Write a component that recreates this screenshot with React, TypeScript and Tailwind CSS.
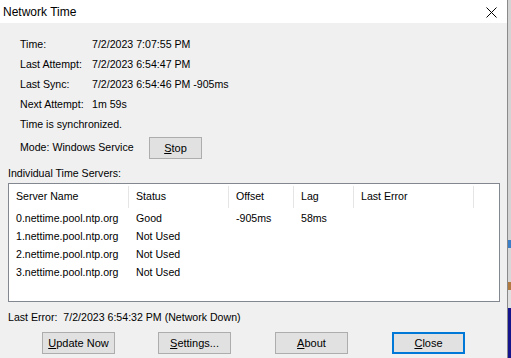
import React from "react";

const font = { fontFamily: '"Liberation Sans", Arial, sans-serif' };

function Btn({ children, w = "w-[73px]", focused = false, className = "" }: { children: React.ReactNode; w?: string; focused?: boolean; className?: string }) {
  return (
    <div
      className={`${w} h-[22px] flex items-center justify-center bg-[#e1e1e1] text-[11px] text-black ${focused ? "border-2 border-[#0078d7]" : "border border-[#adadad]"} ${className}`}
    >
      {children}
    </div>
  );
}

function InfoRow({ label, value }: { label: string; value: string }) {
  return (
    <div className="h-[20px] flex items-center">
      <span className="w-[72px]">{label}</span>
      <span>{value}</span>
    </div>
  );
}

const cols = [
  { name: "Server Name", w: "w-[120px]" },
  { name: "Status", w: "w-[100px]" },
  { name: "Offset", w: "w-[65px]" },
  { name: "Lag", w: "w-[60px]" },
  { name: "Last Error", w: "w-[120px]" },
];

const rows = [
  ["0.nettime.pool.ntp.org", "Good", "-905ms", "58ms", ""],
  ["1.nettime.pool.ntp.org", "Not Used", "", "", ""],
  ["2.nettime.pool.ntp.org", "Not Used", "", "", ""],
  ["3.nettime.pool.ntp.org", "Not Used", "", "", ""],
];

export default function App() {
  return (
    <div className="w-[511px] h-[358px] flex overflow-hidden text-[10.6px] text-black" style={font}>
      <div className="w-[507px] h-full flex flex-col bg-[#f0f0f0]">
        <div className="h-[23px] bg-white flex items-center justify-between shrink-0">
          <span className="pl-[3px] text-[12px]">Network Time</span>
          <svg width="11" height="11" viewBox="0 0 11 11" className="mr-[10px] mt-[1px]">
            <path d="M0.5 0.5 L10.5 10.5 M10.5 0.5 L0.5 10.5" stroke="#000" strokeWidth="1" />
          </svg>
        </div>
        <div className="pl-[20px] pt-[12px] flex flex-col">
          <InfoRow label="Time:" value="7/2/2023 7:07:55 PM" />
          <InfoRow label="Last Attempt:" value="7/2/2023 6:54:47 PM" />
          <InfoRow label="Last Sync:" value="7/2/2023 6:54:46 PM -905ms" />
          <InfoRow label="Next Attempt:" value="1m 59s" />
          <div className="h-[20px] flex items-center">Time is synchronized.</div>
          <div className="mt-[2px] h-[22px] flex items-center">
            <span className="w-[129px]">Mode: Windows Service</span>
            <Btn w="w-[53px]">
              <span className="underline">S</span>top
            </Btn>
          </div>
        </div>
        <div className="pl-[8px] mt-[8px] h-[14px] flex items-center">Individual Time Servers:</div>
        <div className="ml-[8px] mt-[2px] w-[492px] h-[119px] bg-white border border-[#828790] flex flex-col">
          <div className="mt-[2px] h-[22px] flex">
            {cols.map((c) => (
              <div key={c.name} className={`${c.w} h-full flex items-center pl-[7px] border-r border-[#e5e5e5]`}>
                {c.name}
              </div>
            ))}
          </div>
          <div className="mt-[2px] flex flex-col">
            {rows.map((r, i) => (
              <div key={i} className="h-[18px] flex items-center">
                {r.map((v, j) => (
                  <div key={j} className={`${cols[j].w} pl-[7px]`}>
                    {v}
                  </div>
                ))}
              </div>
            ))}
          </div>
        </div>
        <div className="pl-[8px] mt-[9px] h-[14px] flex items-center">
          Last Error:&nbsp; 7/2/2023 6:54:32 PM (Network Down)
        </div>
        <div className="mt-[7px] pl-[42px] flex">
          <Btn>
            <span className="underline">U</span>pdate Now
          </Btn>
          <Btn className="ml-[43px]">
            <span className="underline">S</span>ettings...
          </Btn>
          <Btn className="ml-[44px]">
            <span className="underline">A</span>bout
          </Btn>
          <Btn className="ml-[44px]" focused>
            <span className="underline">C</span>lose
          </Btn>
        </div>
      </div>
      <div className="w-[1px] h-full bg-[#8a8a8a]" />
      <div className="w-[3px] h-full flex flex-col">
        <div className="h-[240px] bg-[#d4d4d4]" />
        <div className="h-[8px] bg-[#3b7fc8]" />
        <div className="h-[34px] bg-[#d8d8d8]" />
        <div className="h-[8px] bg-[#b07a40]" />
        <div className="h-[18px] bg-[#e0e0e0]" />
        <div className="flex-1 bg-[#14148c]" />
      </div>
    </div>
  );
}
